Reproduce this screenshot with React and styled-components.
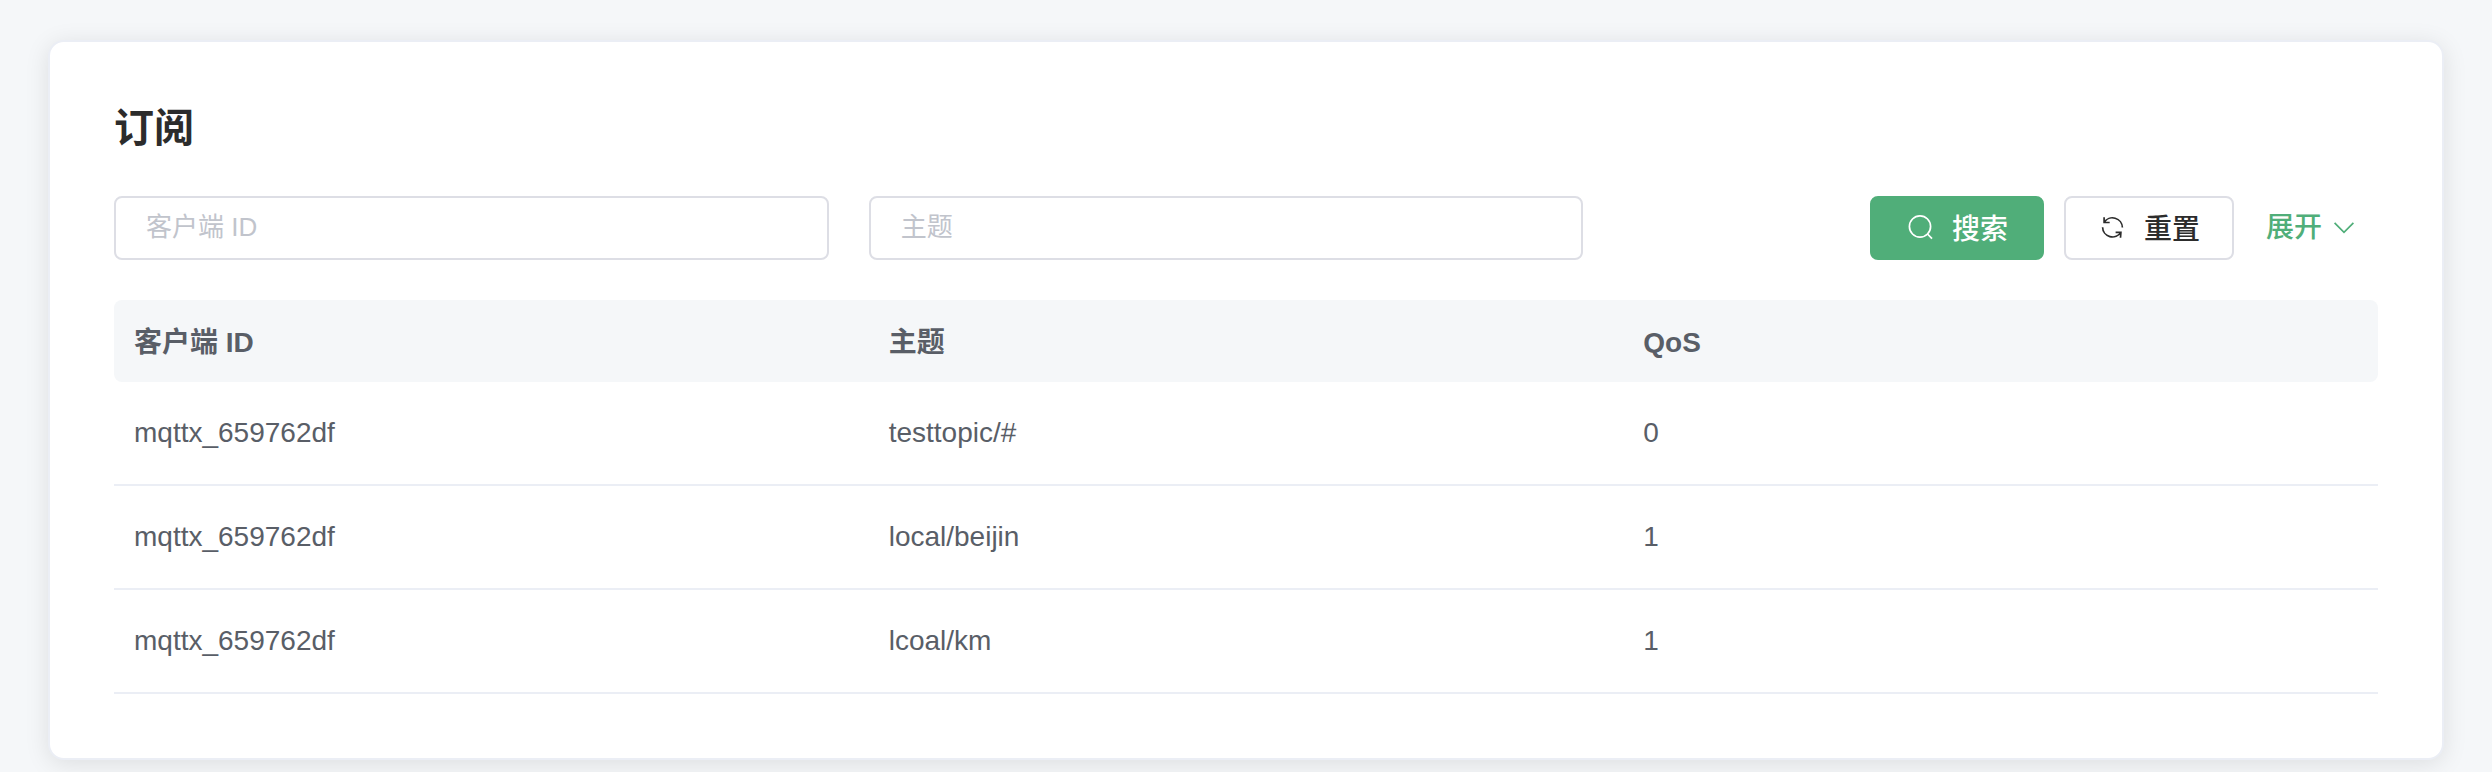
import React from "react";
import styled, { createGlobalStyle } from "styled-components";

const GlobalStyle = createGlobalStyle`
  * {
    box-sizing: border-box;
  }

  body {
    margin: 0;
    background: #f5f7f9;
    color: #595e67;
    font-family: "Liberation Sans", "Noto Sans CJK SC", sans-serif;
    font-size: 28px;
    line-height: 40px;
  }
`;

const Page = styled.main`
  padding: 40px 48px 12px;
`;

const Card = styled.section`
  padding: 64px;
  background: #ffffff;
  border: 2px solid #ebeef5;
  border-radius: 16px;
  box-shadow: 0 4px 24px rgba(0, 0, 0, 0.1);
`;

const Title = styled.h1`
  margin: 0 0 46px;
  color: #2c2c2c;
  font-size: 40px;
  line-height: 44px;
  font-weight: 700;
`;

const SearchForm = styled.form`
  display: grid;
  grid-template-columns: repeat(3, 1fr);
  margin: 0 0 40px;
`;

const Field = styled.div`
  padding-right: 40px;
`;

const TextInput = styled.input`
  display: block;
  width: 100%;
  height: 64px;
  padding: 0 30px 2px;
  background: #ffffff;
  border: 2px solid #dddee5;
  border-radius: 8px;
  color: #595e67;
  font-family: inherit;
  font-size: 26px;
  outline: none;

  &::placeholder {
    color: #c1c4cc;
    opacity: 1;
  }
`;

const Actions = styled.div`
  display: flex;
  justify-content: flex-end;
  gap: 20px;
  padding-right: 20px;
`;

const Button = styled.button`
  display: inline-flex;
  align-items: center;
  gap: 18px;
  height: 64px;
  padding: 0 ${(p) => (p.$primary ? 34 : 32)}px 2px;
  background: ${(p) => (p.$primary ? "#50ae79" : "#ffffff")};
  border: 2px solid ${(p) => (p.$primary ? "#50ae79" : "#dddee5")};
  border-radius: 8px;
  color: ${(p) => (p.$primary ? "#ffffff" : "#2c2c2c")};
  font-family: inherit;
  font-size: 28px;
  font-weight: 500;
  cursor: pointer;
`;

const ExpandLink = styled.a`
  display: inline-flex;
  align-items: center;
  gap: 8px;
  padding-left: 12px;
  color: #50ae79;
  font-size: 28px;
  font-weight: 500;
  text-decoration: none;
`;

const Icon = styled.svg`
  flex: none;
  width: 28px;
  height: 28px;
  fill: none;
  stroke: currentColor;
  stroke-width: 1.7px;
`;

const Table = styled.table`
  width: 100%;
  table-layout: fixed;
  border-collapse: separate;
  border-spacing: 0;
  text-align: left;
`;

const HeadCell = styled.th`
  height: 82px;
  padding: 4px 20px 0;
  background: #f5f7f9;
  font-weight: 700;

  &:first-child {
    border-radius: 8px 0 0 8px;
  }

  &:last-child {
    border-radius: 0 8px 8px 0;
  }
`;

const Cell = styled.td`
  height: 104px;
  padding: 0 20px;
  border-bottom: 2px solid #ebeef5;
`;

const rows = [
  { client: "mqttx_659762df", topic: "testtopic/#", qos: 0 },
  { client: "mqttx_659762df", topic: "local/beijin", qos: 1 },
  { client: "mqttx_659762df", topic: "lcoal/km", qos: 1 },
];

const SearchIcon = () => (
  <Icon viewBox="0 0 28 28" aria-hidden="true">
    <circle cx="14" cy="13.5" r="10.6" />
    <path d="M21.5 21 26 25.6" />
  </Icon>
);

const RefreshIcon = () => (
  <Icon viewBox="0 0 28 28" aria-hidden="true">
    <path d="M6.1 4.2V9.5H11.7M6.1 9.5A9.9 9.9 0 0 1 24.4 14.6" />
    <path d="M22.5 24.8 22.9 19.3H17.6M22.9 19.3A9.9 9.9 0 0 1 4.6 14.2" />
  </Icon>
);

const ChevronIcon = () => (
  <Icon viewBox="0 0 28 28" aria-hidden="true">
    <path d="M4.6 8.9 14 18.4 23.4 8.9" />
  </Icon>
);

export default function App() {
  return (
    <>
      <GlobalStyle />
      <Page>
        <Card>
          <Title>订阅</Title>
          <SearchForm onSubmit={(e) => e.preventDefault()}>
            <Field>
              <TextInput type="text" aria-label="客户端 ID" placeholder="客户端 ID" />
            </Field>
            <Field>
              <TextInput type="text" aria-label="主题" placeholder="主题" />
            </Field>
            <Actions>
              <Button type="submit" $primary>
                <SearchIcon />
                搜索
              </Button>
              <Button type="reset">
                <RefreshIcon />
                重置
              </Button>
              <ExpandLink href="#expand">
                展开
                <ChevronIcon />
              </ExpandLink>
            </Actions>
          </SearchForm>
          <Table>
            <thead>
              <tr>
                <HeadCell scope="col">客户端 ID</HeadCell>
                <HeadCell scope="col">主题</HeadCell>
                <HeadCell scope="col">QoS</HeadCell>
              </tr>
            </thead>
            <tbody>
              {rows.map((row) => (
                <tr key={row.topic}>
                  <Cell>{row.client}</Cell>
                  <Cell>{row.topic}</Cell>
                  <Cell>{row.qos}</Cell>
                </tr>
              ))}
            </tbody>
          </Table>
        </Card>
      </Page>
    </>
  );
}
